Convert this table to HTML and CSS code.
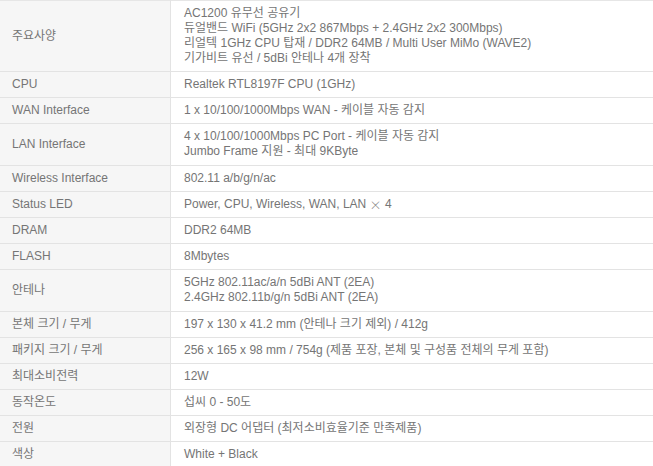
FILE: index.html
```html
<!DOCTYPE html>
<html lang="ko">
<head>
<meta charset="utf-8">
<link rel="stylesheet" href="styles.css">
</head>
<body>
<table class="spec">
  <tbody>
    <tr><th>주요사양</th><td>AC1200 유무선 공유기<br>듀얼밴드 WiFi (5GHz 2x2 867Mbps + 2.4GHz 2x2 300Mbps)<br>리얼텍 1GHz CPU 탑재 / DDR2 64MB / Multi User MiMo (WAVE2)<br>기가비트 유선 / 5dBi 안테나 4개 장착</td></tr>
    <tr><th>CPU</th><td>Realtek RTL8197F CPU (1GHz)</td></tr>
    <tr><th>WAN Interface</th><td>1 x 10/100/1000Mbps WAN - 케이블 자동 감지</td></tr>
    <tr class="two"><th>LAN Interface</th><td>4 x 10/100/1000Mbps PC Port - 케이블 자동 감지<br>Jumbo Frame 지원 - 최대 9KByte</td></tr>
    <tr><th>Wireless Interface</th><td>802.11 a/b/g/n/ac</td></tr>
    <tr><th>Status LED</th><td>Power, CPU, Wireless, WAN, LAN <span class="cjk">×</span> 4</td></tr>
    <tr><th>DRAM</th><td>DDR2 64MB</td></tr>
    <tr><th>FLASH</th><td>8Mbytes</td></tr>
    <tr class="two"><th>안테나</th><td>5GHz 802.11ac/a/n 5dBi ANT (2EA)<br>2.4GHz 802.11b/g/n 5dBi ANT (2EA)</td></tr>
    <tr><th>본체 크기 / 무게</th><td>197 x 130 x 41.2 mm (안테나 크기 제외) / 412g</td></tr>
    <tr><th>패키지 크기 / 무게</th><td>256 x 165 x 98 mm / 754g (제품 포장, 본체 및 구성품 전체의 무게 포함)</td></tr>
    <tr><th>최대소비전력</th><td>12W</td></tr>
    <tr><th>동작온도</th><td>섭씨 0 - 50도</td></tr>
    <tr><th>전원</th><td>외장형 DC 어댑터 (최저소비효율기준 만족제품)</td></tr>
    <tr><th>색상</th><td>White + Black</td></tr>
  </tbody>
</table>
</body>
</html>
```
FILE: styles.css
```css
html, body {
  margin: 0;
  padding: 0;
  background: #ffffff;
}
.spec {
  width: 653px;
  border-collapse: collapse;
  border-top: 1px solid #e6e6e6;
  font-family: "Liberation Sans", "Noto Sans CJK KR", sans-serif;
  font-size: 12px;
  line-height: 15px;
  color: #757575;
}
.spec th, .spec td {
  padding: 5px 0 5px 13px;
  border-bottom: 1px solid #e3e3e3;
  font-weight: normal;
  text-align: left;
  vertical-align: middle;
}
.spec th {
  width: 158px;
  padding-left: 12px;
  background: #f6f6f6;
  border-right: 1px solid #e3e3e3;
}
.spec .two td {
  padding-bottom: 6px;
}
.cjk {
  display: inline-block;
  height: 15px;
  line-height: 15px;
  vertical-align: top;
  font-family: "Noto Sans CJK KR", sans-serif;
  font-weight: 300;
}
```
